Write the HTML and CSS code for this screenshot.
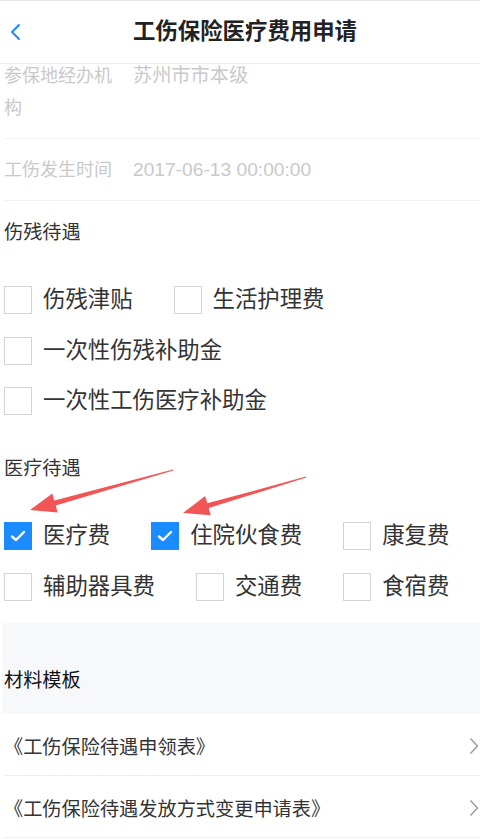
FILE: index.html
```html
<!DOCTYPE html>
<html lang="zh-CN">
<head>
<meta charset="utf-8">
<title>工伤保险医疗费用申请</title>
<link rel="stylesheet" href="styles.css">
</head>
<body>
<header class="header">
  <div class="back">
    <svg width="14" height="18" viewBox="0 0 14 18"><path d="M11 2 L4 9 L11 16" fill="none" stroke="#1a8cff" stroke-width="2" stroke-linecap="round" stroke-linejoin="round"/></svg>
  </div>
  <h1 class="title">工伤保险医疗费用申请</h1>
  <div class="spacer"></div>
</header>

<main class="page">
  <div class="form">
    <div class="field">
      <div class="label">参保地经办机构</div>
      <div class="value">苏州市市本级</div>
    </div>
    <div class="field">
      <div class="label">工伤发生时间</div>
      <div class="value">2017-06-13 00:00:00</div>
    </div>

    <div class="section-title">伤残待遇</div>
    <div class="checks">
      <label class="check"><span class="box"></span><span class="text">伤残津贴</span></label>
      <label class="check"><span class="box"></span><span class="text">生活护理费</span></label>
      <label class="check check-full"><span class="box"></span><span class="text">一次性伤残补助金</span></label>
      <label class="check check-full"><span class="box"></span><span class="text">一次性工伤医疗补助金</span></label>
    </div>

    <div class="section-title">医疗待遇</div>
    <div class="checks checks-last">
      <label class="check"><span class="box box-on"><svg width="26" height="26" viewBox="0 0 26 26"><path d="M7 13.5 L11 17 L19 9" fill="none" stroke="#fff" stroke-width="2.4" stroke-linecap="round" stroke-linejoin="round"/></svg></span><span class="text">医疗费</span></label>
      <label class="check"><span class="box box-on"><svg width="26" height="26" viewBox="0 0 26 26"><path d="M7 13.5 L11 17 L19 9" fill="none" stroke="#fff" stroke-width="2.4" stroke-linecap="round" stroke-linejoin="round"/></svg></span><span class="text">住院伙食费</span></label>
      <label class="check"><span class="box"></span><span class="text">康复费</span></label>
      <label class="check"><span class="box"></span><span class="text">辅助器具费</span></label>
      <label class="check"><span class="box"></span><span class="text">交通费</span></label>
      <label class="check"><span class="box"></span><span class="text">食宿费</span></label>
    </div>
  </div>

  <div class="band">材料模板</div>

  <ul class="list">
    <li class="item"><span>《工伤保险待遇申领表》</span><svg class="chev" width="10" height="18" viewBox="0 0 10 18"><path d="M1.5 1.5 L8.5 9 L1.5 16.5" fill="none" stroke="#9a9a9a" stroke-width="1.4"/></svg></li>
    <li class="item"><span>《工伤保险待遇发放方式变更申请表》</span><svg class="chev" width="10" height="18" viewBox="0 0 10 18"><path d="M1.5 1.5 L8.5 9 L1.5 16.5" fill="none" stroke="#9a9a9a" stroke-width="1.4"/></svg></li>
  </ul>
</main>

<svg class="annot" width="480" height="840" viewBox="0 0 480 840">
  <polygon points="30,510 52.3,493.4 54.3,500.6 173,469.6 173.3,470.6 55.7,505.4 57.7,512.6" fill="#f25555"/>
  <polygon points="183,513 205.2,496.1 207.3,503.3 306,476.6 306.3,477.6 208.7,508.1 210.8,515.3" fill="#f25555"/>
</svg>
</body>
</html>
```

FILE: styles.css
```css
* { box-sizing: border-box; }

html, body {
  margin: 0;
  padding: 0;
}

body {
  width: 480px;
  height: 840px;
  overflow: hidden;
  position: relative;
  background: #fff;
  font-family: "Liberation Sans", "Noto Sans CJK SC", sans-serif;
  color: #333;
}

.header {
  position: fixed;
  top: 0;
  left: 0;
  width: 480px;
  height: 64px;
  background: #fff;
  border-top: 1px solid #e6e6e6;
  border-bottom: 1px solid #efefef;
  display: flex;
  align-items: center;
  z-index: 10;
}

.back {
  width: 44px;
  padding-left: 8px;
  display: flex;
  align-items: center;
  height: 100%;
}

.title {
  flex: 1;
  margin: 0;
  text-align: center;
  font-size: 22.4px;
  font-weight: bold;
  color: #222;
  line-height: 30px;
}

.spacer { width: 34px; }

.page {
  padding-top: 45px;
}

.form {
  padding-left: 4px;
}

.field {
  display: flex;
  padding: 15px 0 14px;
  border-bottom: 1px solid #f2f2f2;
  line-height: 32px;
}

.label {
  width: 112px;
  margin-right: 17px;
  font-size: 18px;
  color: #c9c9c9;
}

.value {
  font-size: 19.2px;
  color: #c9c9c9;
}

.section-title {
  padding-top: 16px;
  font-size: 19.2px;
  line-height: 32px;
  color: #333;
}

.checks {
  display: flex;
  flex-wrap: wrap;
  column-gap: 41px;
  row-gap: 22.5px;
  padding: 37px 0 22px;
}

.check {
  display: flex;
  align-items: center;
  height: 28px;
}

.check-full {
  flex-basis: 100%;
}

.box {
  width: 28px;
  height: 28px;
  border: 1px solid #d4d4d4;
  background: #fff;
  display: flex;
  align-items: center;
  justify-content: center;
  flex: none;
}

.box-on {
  background: #1a8cff;
  border-color: #1a8cff;
}

.text {
  margin-left: 11px;
  font-size: 22.4px;
  line-height: 28px;
  color: #333;
  white-space: nowrap;
}

.band {
  margin-left: 2px;
  background: #f7f8fa;
  padding: 42px 0 17px 2px;
  font-size: 19.2px;
  line-height: 32px;
  color: #111;
}

.list {
  list-style: none;
  margin: 0;
  padding: 0 0 0 4px;
}

.item {
  display: flex;
  align-items: center;
  justify-content: space-between;
  height: 62px;
  padding-top: 3px;
  border-bottom: 1px solid #f0f0f0;
  font-size: 19.2px;
  color: #333;
}

.chev {
  margin-right: 1px;
}

.annot {
  position: absolute;
  top: 0;
  left: 0;
  pointer-events: none;
  z-index: 20;
}
```
